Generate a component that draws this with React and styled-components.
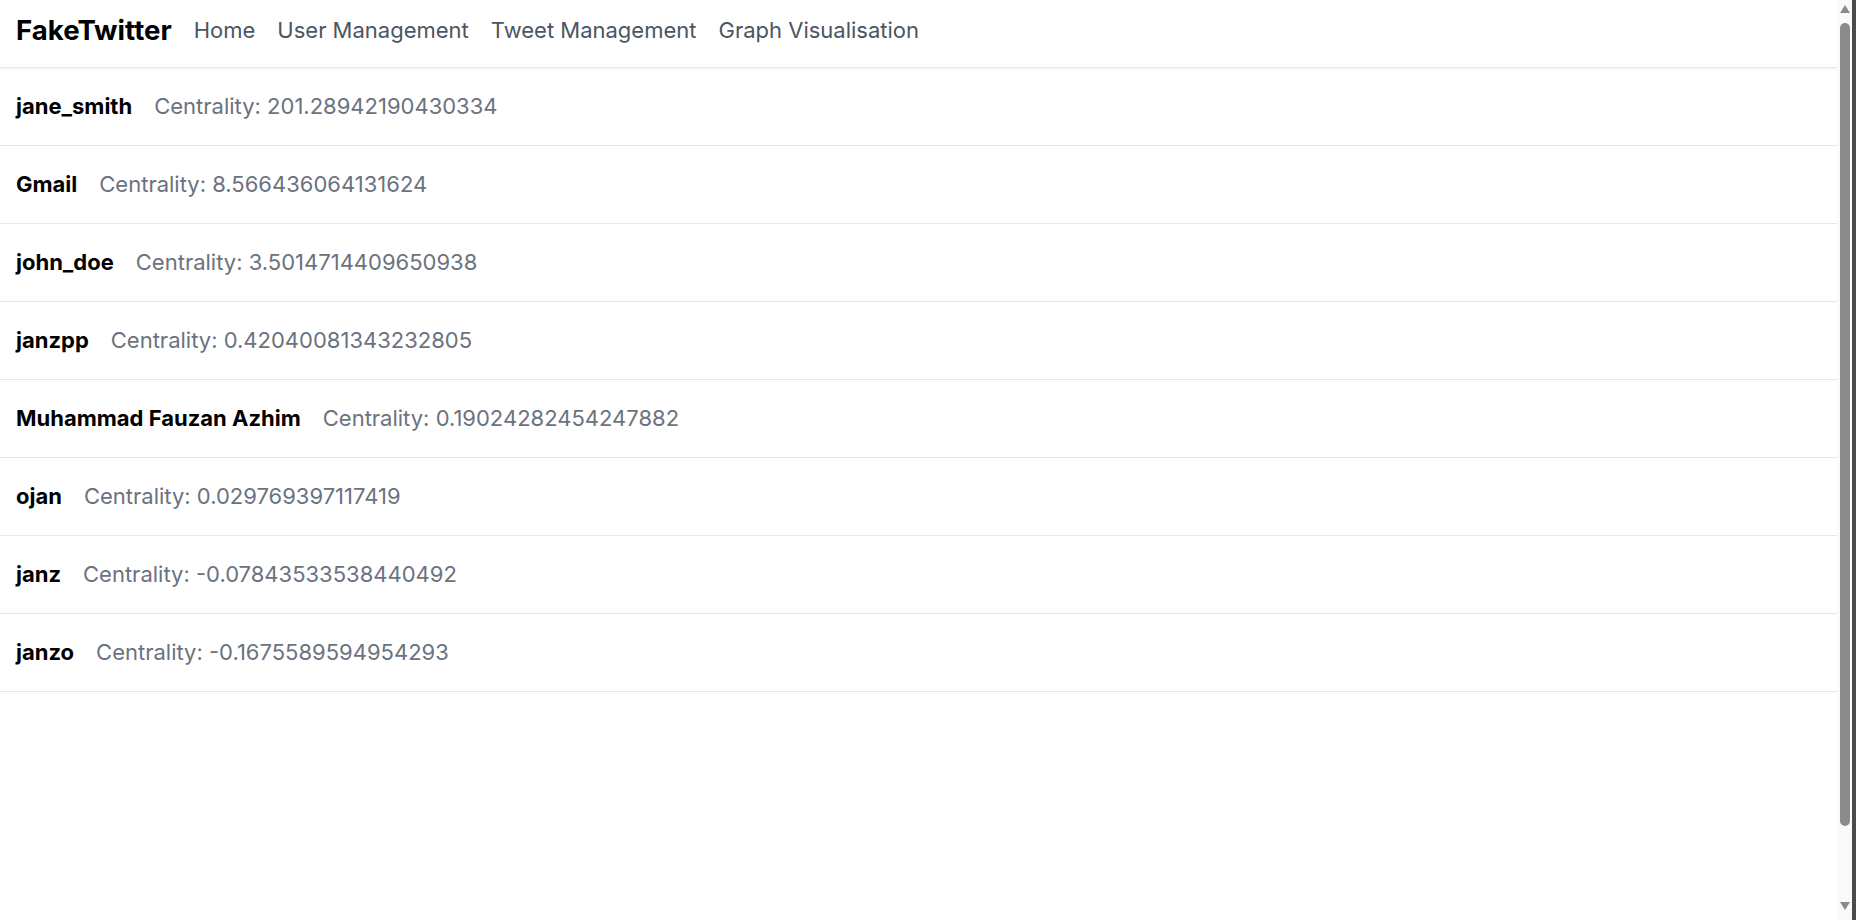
import React from "react";
import styled, { createGlobalStyle } from "styled-components";

const GlobalStyle = createGlobalStyle`
  html, body {
    margin: 0;
    padding: 0;
    background: #fff;
    font-family: Inter, "Noto Sans", Arial, sans-serif;
    overflow: hidden;
  }
`;

const Page = styled.div`
  min-height: 100vh;
  padding-right: 19px;
  background: #fff;
`;

const NavBar = styled.nav`
  display: flex;
  align-items: center;
  gap: 22px;
  height: 68px;
  padding: 0 16px 8px;
  box-sizing: border-box;
  border-bottom: 1px solid #e5e7eb;
  box-shadow: 0 1px 3px rgba(0, 0, 0, 0.06);
`;

const Brand = styled.span`
  font-size: 27.6px;
  font-weight: 700;
  color: #000;
`;

const NavLink = styled.a`
  font-size: 22px;
  color: #4b5563;
  text-decoration: none;
  cursor: pointer;
`;

const List = styled.ul`
  list-style: none;
  margin: 0;
  padding: 0;
`;

const Row = styled.li`
  display: flex;
  align-items: center;
  gap: 22px;
  padding: 23px 16px;
  line-height: 31px;
  font-size: 22px;
  border-bottom: 1px solid #e5e7eb;
`;

const Username = styled.span`
  font-weight: 700;
  color: #000;
`;

const Score = styled.span`
  color: #6b7280;
`;

/* fake classic scrollbar drawn over the right edge */
const ScrollRail = styled.div`
  position: fixed;
  top: 0;
  right: 0;
  bottom: 0;
  width: 15px;
  display: flex;
  flex-direction: column;
  align-items: center;
  background: #fafafa;
  border-right: 4px solid #4a4a50;
`;

const Arrow = styled.div`
  width: 0;
  height: 0;
  margin: ${({ down }) => (down ? "auto 0 10px" : "5px 0 0")};
  border-left: 5px solid transparent;
  border-right: 5px solid transparent;
  ${({ down }) => (down ? "border-top" : "border-bottom")}: 8px solid #8a8a8a;
`;

const Thumb = styled.div`
  width: 10px;
  height: 803px;
  margin-top: 10px;
  background: #8b8b8b;
  border-radius: 5px;
`;

const users = [
  { name: "jane_smith", centrality: "201.28942190430334" },
  { name: "Gmail", centrality: "8.566436064131624" },
  { name: "john_doe", centrality: "3.5014714409650938" },
  { name: "janzpp", centrality: "0.42040081343232805" },
  { name: "Muhammad Fauzan Azhim", centrality: "0.19024282454247882" },
  { name: "ojan", centrality: "0.029769397117419" },
  { name: "janz", centrality: "-0.07843533538440492" },
  { name: "janzo", centrality: "-0.1675589594954293" },
];

const App = () => {
  const links = ["Home", "User Management", "Tweet Management", "Graph Visualisation"];

  return (
    <Page>
      <GlobalStyle />
      <NavBar>
        <Brand>FakeTwitter</Brand>
        {links.map(l => (
          <NavLink key={l}>{l}</NavLink>
        ))}
      </NavBar>
      <List>
        {users.map(u => (
          <Row key={u.name}>
            <Username>{u.name}</Username>
            <Score>Centrality: {u.centrality}</Score>
          </Row>
        ))}
      </List>
      <ScrollRail>
        <Arrow />
        <Thumb />
        <Arrow down />
      </ScrollRail>
    </Page>
  );
};

export default App;
